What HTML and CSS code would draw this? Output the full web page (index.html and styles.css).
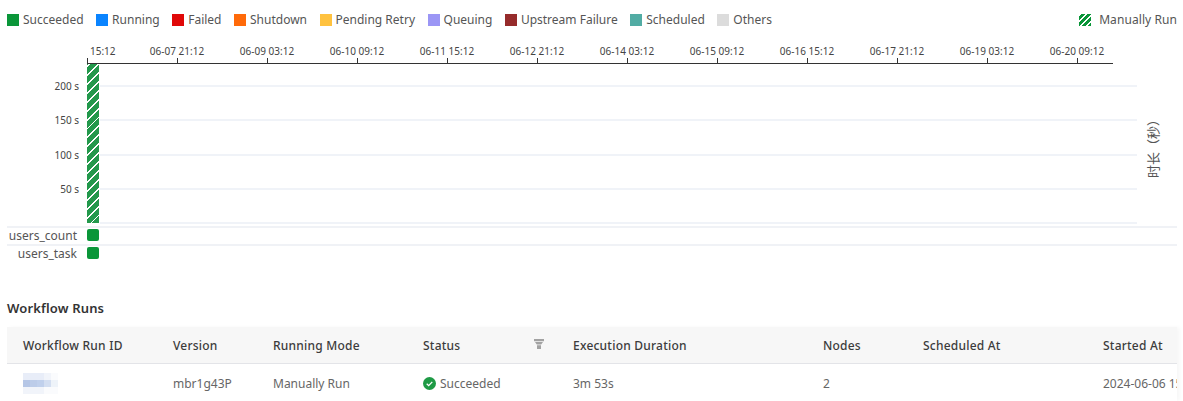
FILE: index.html
```html
<!DOCTYPE html>
<html lang="en">
<head>
<meta charset="utf-8">
<title>Workflow Runs</title>
<link rel="stylesheet" href="styles.css">
</head>
<body>
<div class="page">
  <div class="legend">
    <div class="legend-item"><i class="swatch succeeded"></i>Succeeded</div>
    <div class="legend-item"><i class="swatch running"></i>Running</div>
    <div class="legend-item"><i class="swatch failed"></i>Failed</div>
    <div class="legend-item"><i class="swatch shutdown"></i>Shutdown</div>
    <div class="legend-item"><i class="swatch pending"></i>Pending Retry</div>
    <div class="legend-item"><i class="swatch queuing"></i>Queuing</div>
    <div class="legend-item"><i class="swatch upstream"></i>Upstream Failure</div>
    <div class="legend-item"><i class="swatch scheduled"></i>Scheduled</div>
    <div class="legend-item"><i class="swatch others"></i>Others</div>
    <div class="legend-item legend-manual"><i class="swatch hatched-small"></i>Manually Run</div>
  </div>

  <div class="axis-labels">
    <span class="axis-first">15:12</span>
    <span>06-07 21:12</span><span>06-09 03:12</span><span>06-10 09:12</span><span>06-11 15:12</span>
    <span>06-12 21:12</span><span>06-14 03:12</span><span>06-15 09:12</span><span>06-16 15:12</span>
    <span>06-17 21:12</span><span>06-19 03:12</span><span>06-20 09:12</span>
  </div>
  <div class="axis-ticks">
    <i></i><i></i><i></i><i></i><i></i><i></i><i></i><i></i><i></i><i></i><i></i><i class="tick-last"></i>
  </div>

  <div class="plot">
    <div class="bar"></div>
    <div class="y-title">时长（秒）</div>
    <div class="y-row"><span>200 s</span><i></i></div>
    <div class="y-row"><span>150 s</span><i></i></div>
    <div class="y-row"><span>100 s</span><i></i></div>
    <div class="y-row"><span>50 s</span><i></i></div>
    <div class="y-row y-zero"><span></span><i></i></div>
  </div>

  <div class="task-row"><span class="task-name">users_count</span><i class="task-dot"></i></div>
  <div class="task-row"><span class="task-name">users_task</span><i class="task-dot"></i></div>

  <h2 class="section-title">Workflow Runs</h2>

  <div class="table">
    <div class="tr th">
      <div class="c c-id">Workflow Run ID</div>
      <div class="c c-ver">Version</div>
      <div class="c c-mode">Running Mode</div>
      <div class="c c-status">Status
        <svg class="filter" viewBox="0 0 10 10" width="10" height="10"><path d="M0 0h10v2.2H0z M1 3h8L7.2 5.6H2.8z M3 6.2h4V10H3z" fill="#a2a2a2"/></svg>
      </div>
      <div class="c c-dur">Execution Duration</div>
      <div class="c c-nodes">Nodes</div>
      <div class="c c-sched">Scheduled At</div>
      <div class="c c-start">Started At</div>
    </div>
    <div class="tr td">
      <div class="c c-id"><span class="blur-id"><i class="b1"></i><i class="b1"></i><i class="b1"></i><i class="b2"></i><i class="b3"></i><i class="d1"></i><i class="d2"></i><i class="d3"></i><i class="d4"></i><i class="d5"></i><i class="b2"></i><i class="b2"></i><i class="b2"></i><i class="b3"></i><i class="b3"></i></span></div>
      <div class="c c-ver">mbr1g43P</div>
      <div class="c c-mode">Manually Run</div>
      <div class="c c-status"><svg class="check" viewBox="0 0 14 14" width="13" height="13"><circle cx="7" cy="7" r="7" fill="#1e9a45"/><path d="M4 7.2l2.1 2.1L10 5.2" fill="none" stroke="#fff" stroke-width="1.4"/></svg>Succeeded</div>
      <div class="c c-dur">3m 53s</div>
      <div class="c c-nodes">2</div>
      <div class="c c-sched"></div>
      <div class="c c-start">2024-06-06 15:12:08</div>
    </div>
  </div>
</div>
</body>
</html>
```
FILE: styles.css
```css
* { box-sizing: border-box; }
html, body { margin: 0; height: 401px; overflow: hidden; background: #fff; }
body { font-family: "Noto Sans", "Noto Sans CJK SC", sans-serif; font-size: 12px; color: #555; }
i { display: block; }

.page { width: 1183px; padding-left: 7px; }

.legend { display: flex; gap: 12.5px; height: 14px; margin-top: 13px; width: 1170px; line-height: 14px; }
.legend-item { display: flex; align-items: center; gap: 4px; white-space: nowrap; }
.legend-manual { margin-left: auto; gap: 8px; letter-spacing: .08px; }
.swatch { width: 12px; height: 12px; flex: none; }
.succeeded { background: #0a9639; }
.running { background: #0a84ff; }
.failed { background: #e00808; }
.shutdown { background: #ff6a0a; }
.pending { background: #ffc23f; }
.queuing { background: #9b96f5; }
.upstream { background: #962b2b; }
.scheduled { background: #52aca4; }
.others { background: #dcdcdc; }
.hatched-small { background: repeating-linear-gradient(-45deg, #0a9639 0 2.8px, #fff 2.8px 4.2px); }

.axis-labels { display: flex; margin: 17px 0 0 80px; width: 1060px; height: 14px; font-size: 10px; line-height: 14px; color: #444; }
.axis-labels span { flex: none; width: 90px; text-align: center; white-space: nowrap; }
.axis-labels .axis-first { width: 45px; text-align: left; padding-left: 3px; }
.axis-ticks { display: flex; margin-left: 80px; width: 1026px; height: 6px; border-bottom: 1px solid #333; }
.axis-ticks i { flex: none; width: 90px; border-left: 1px solid #333; }
.axis-ticks .tick-last { width: 36px; }

.plot { position: relative; padding-top: 5px; width: 1130px; }
.y-row { display: flex; align-items: center; height: 34.25px; }
.y-row span { flex: none; width: 72px; text-align: right; font-size: 10px; color: #444; line-height: 14px; }
.y-row i { flex: none; margin-left: 21px; width: 1037px; height: 2px; background: #f0f3f8; }
.y-row.y-zero { height: 20px; align-items: flex-end; padding-bottom: 2px; }
.bar { position: absolute; left: 80px; top: 0; width: 12px; height: 159px; background: repeating-linear-gradient(-45deg, #23994c 0 5px, #fff 5px 6.3px); }
.y-title { position: absolute; left: 1138px; top: 49px; writing-mode: vertical-rl; text-orientation: sideways; transform: rotate(180deg); font-size: 13px; line-height: 16px; color: #555; }

.task-row { display: flex; align-items: center; gap: 10px; height: 18px; width: 1170px; border-top: 2px solid #f0f2f6; padding-bottom: 2px; }
.task-name { width: 70px; text-align: right; font-size: 12px; white-space: nowrap; }
.task-dot { width: 12px; height: 12px; border-radius: 2px; background: #0a9639; }

.section-title { margin: 37px 0 0; font-size: 13px; line-height: 18px; font-weight: 600; color: #333; letter-spacing: .15px; }

.table { margin-top: 10px; width: 1170px; overflow: hidden; box-shadow: 3px 0 4px rgba(0,0,0,.03); }
.tr { display: flex; align-items: center; white-space: nowrap; }
.th { height: 37px; background: #f7f7f7; border-bottom: 1px solid #e3e4e8; font-weight: 500; color: #3c3c3c; letter-spacing: .22px; }
.td { height: 37px; padding-top: 2px; color: #666; }
.c { flex: none; padding-left: 16px; }
.c-id { width: 150px; }
.c-ver { width: 100px; }
.c-mode { width: 150px; }
.c-status { width: 150px; display: flex; align-items: center; gap: 4px; padding-right: 13px; }
.c-dur { width: 250px; }
.c-nodes { width: 100px; }
.c-sched { width: 180px; }
.c-start { width: 150px; }
.filter { margin-left: auto; margin-top: -2px; }

.blur-id { display: grid; grid-template-columns: repeat(5, 7px); grid-auto-rows: 7px; width: 35px; }
.b1 { background: #e8edf8; }
.b2 { background: #f1f4fa; }
.b3 { background: #fafbfd; }
.d1 { background: #b5c6e6; }
.d2 { background: #bccce9; }
.d3 { background: #c0d0ec; }
.d4 { background: #d3def1; }
.d5 { background: #eef3f9; }
```
